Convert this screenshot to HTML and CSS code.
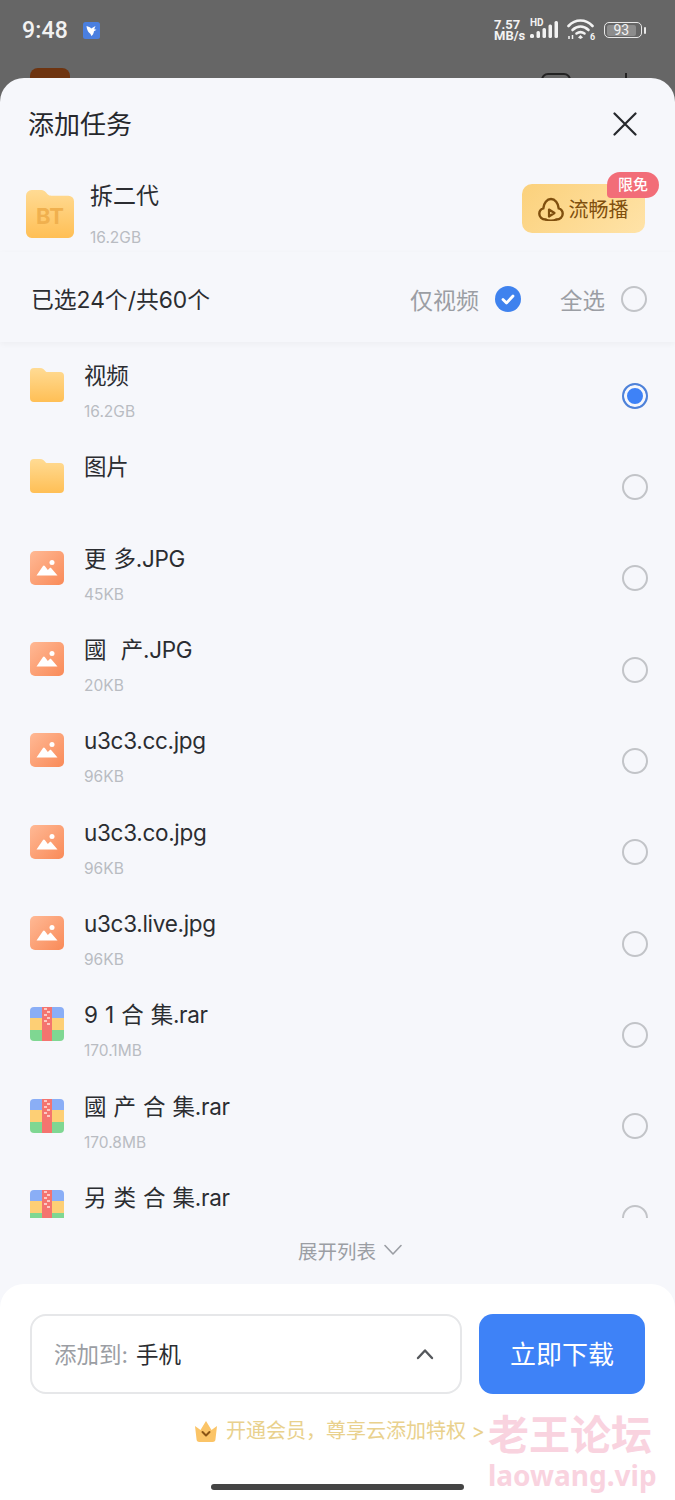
FILE: index.html
```html
<!DOCTYPE html>
<html lang="en">
<head>
    <meta charset="UTF-8">
    <title>添加任务</title>
    <link rel="stylesheet" href="styles.css">
</head>

<body>
    <svg class="defs" width="0" height="0">
        <defs>
            <linearGradient id="folderFill" x1="0" y1="0" x2="0" y2="1">
                <stop offset="0" stop-color="#ffdb94"/>
                <stop offset="1" stop-color="#ffbf55"/>
            </linearGradient>
            <linearGradient id="imageFill" x1="0" y1="0" x2="1" y2="1">
                <stop offset="0" stop-color="#ffb995"/>
                <stop offset="1" stop-color="#f98a58"/>
            </linearGradient>
            <symbol id="folder" viewBox="0 0 34 34">
                <path d="M0 4a4 4 0 0 1 4-4h6c3 0 4 1.500 5.500 3.200 .7 .7 1.300 .8 2.500 .8h12a4 4 0 0 1 4 4v22a4 4 0 0 1-4 4H4a4 4 0 0 1-4-4z" fill="url(#folderFill)"/>
            </symbol>
            <symbol id="image" viewBox="0 0 34 34">
                <rect width="34" height="34" rx="5" fill="url(#imageFill)"/>
                <circle cx="22" cy="11.500" r="2.500" fill="#fff"/>
                <path d="M6.500 24.500 13 15c.5-.7 1.300-.7 1.800 0l3 4 1.800-1.800c.5-.5 1.200-.5 1.700 0l6.200 7.300z" fill="#fff"/>
            </symbol>
            <symbol id="zip" viewBox="0 0 34 34">
                <path d="M0 11V4a4 4 0 0 1 4-4h26a4 4 0 0 1 4 4v7z" fill="#8aaef6"/>
                <rect y="11" width="34" height="12" fill="#fdcf75"/>
                <path d="M0 23h34v7a4 4 0 0 1-4 4H4a4 4 0 0 1-4-4z" fill="#7fd792"/>
                <rect x="12" width="10" height="34" fill="#f4746f"/>
                <path d="M14 1h3v2h-3zM17 4h3v2h-3zM14 7h3v2h-3zM17 10h3v2h-3zM14 13h3v2h-3zM17 16h3v2h-3z" fill="#fbc9c4"/>
            </symbol>
        </defs>
    </svg>

    <main class="screen">
        <div class="backdrop">
            <div class="statusbar">
                <div class="status-left">
                    <span class="clock">9:48</span>
                    <svg class="app-icon" viewBox="0 0 17 17">
                        <rect width="17" height="17" rx="2.500" fill="#4a7fe0"/>
                        <path d="M3.500 4c2 .4 3.500 1.200 4.700 2.500L12.500 4l-1.300 3.200 2.300.6-2.500 1.400c-.3 2.300-1.300 3.800-2.700 4.800-.3-1.400-.9-2.200-1.900-3C4.700 9.500 3.800 7 3.500 4z" fill="#fff"/>
                    </svg>
                </div>
                <div class="status-right">
                    <span class="speed">7.57<br>MB/s</span>
                    <span class="signal">
                        <span class="hd">HD</span>
                        <svg class="bars" viewBox="0 0 29 18">
                            <rect x="0" y="13" width="4" height="4" rx="1.500"/>
                            <rect x="6.500" y="10" width="3.500" height="7" rx="1.500"/>
                            <rect x="12.500" y="7" width="3.500" height="10" rx="1.500"/>
                            <rect x="18.500" y="3.500" width="3.500" height="13.500" rx="1.500"/>
                            <rect x="24.500" y="0" width="3.500" height="17" rx="1.500"/>
                        </svg>
                    </span>
                    <svg class="wifi" viewBox="0 0 29 22">
                        <g fill="none" stroke="#f2f2f2" stroke-width="2.600" stroke-linecap="round">
                            <path d="M1.500 8C8.500 .7 18.500 .7 25.500 8"/>
                            <path d="M5.500 12c5-4.500 11-4.500 16 0"/>
                            <path d="M9.500 15.500c2.800-2 5.200-2 8 0"/>
                        </g>
                        <path d="M11 19.500l2.500-2.500 2.500 2.500-2.500 1.500z" fill="#f2f2f2"/>
                        <path d="M2 21v-3M5.500 21v-4" stroke="#f2f2f2" stroke-width="1.500"/>
                        <text x="23" y="21.500" class="wifi-six">6</text>
                    </svg>
                    <span class="battery">
                        <span class="battery-body"><span class="battery-level">93</span></span>
                        <span class="battery-nub"></span>
                    </span>
                </div>
            </div>
            <div class="peek">
                <span class="peek-app"></span>
                <span class="peek-actions">
                    <span class="peek-box"></span>
                    <span class="peek-plus"></span>
                </span>
            </div>
        </div>

        <section class="sheet">
            <header class="sheet-head">
                <h1>添加任务</h1>
                <svg class="close" viewBox="0 0 24 24">
                    <path d="M1.500 1.500l21 21M22.500 1.500l-21 21" fill="none" stroke="#26282c" stroke-width="2.200" stroke-linecap="round"/>
                </svg>
            </header>

            <div class="torrent">
                <div class="bt-icon">
                    <svg class="bt-folder" viewBox="0 0 34 34"><use href="#folder"/></svg>
                    <span class="bt-label">BT</span>
                </div>
                <div class="torrent-info">
                    <div class="torrent-name">拆二代</div>
                    <div class="torrent-size">16.2GB</div>
                </div>
                <button class="play-btn" type="button">
                    <svg class="play-icon" viewBox="0 0 26 24">
                        <path d="M7.500 22.500C4 22.500 1.300 20 1.300 16.800c0-2.600 1.700-4.700 4-5.400C5.700 6 9 2 13 2s7.300 4 7.700 9.400c2.300 .7 4 2.800 4 5.400 0 3.200-2.700 5.700-6.200 5.700" fill="none" stroke="#7f4f0e" stroke-width="2.400" stroke-linecap="round"/>
                        <path d="M7.500 22.500c1.500 .6 3.500 1 5.500 1s4-.4 5.500-1" fill="none" stroke="#7f4f0e" stroke-width="2"/>
                        <path d="M11 12.500l5.500 3.500-5.500 3.500z" fill="none" stroke="#7f4f0e" stroke-width="2.200" stroke-linejoin="round"/>
                    </svg>
                    流畅播
                    <span class="free-badge">限免</span>
                </button>
            </div>

            <div class="select-bar">
                <span class="select-count">已选24个/共60个</span>
                <span class="select-opt">仅视频</span>
                <svg class="check" viewBox="0 0 26 26">
                    <circle cx="13" cy="13" r="13" fill="#3f82ee"/>
                    <path d="M8 13.500l3.500 3.500 6.500-7" fill="none" stroke="#fff" stroke-width="2.800" stroke-linecap="round" stroke-linejoin="round"/>
                </svg>
                <span class="select-opt select-all">全选</span>
                <span class="radio"></span>
            </div>

            <div class="file-list">
                <div class="file-row">
                    <svg class="file-icon"><use href="#folder"/></svg>
                    <div class="file-text"><div class="file-name">视频</div><div class="file-size">16.2GB</div></div>
                    <span class="radio radio-on"></span>
                </div>
                <div class="file-row">
                    <svg class="file-icon"><use href="#folder"/></svg>
                    <div class="file-text"><div class="file-name">图片</div></div>
                    <span class="radio"></span>
                </div>
                <div class="file-row">
                    <svg class="file-icon"><use href="#image"/></svg>
                    <div class="file-text"><div class="file-name">更 多.JPG</div><div class="file-size">45KB</div></div>
                    <span class="radio"></span>
                </div>
                <div class="file-row">
                    <svg class="file-icon"><use href="#image"/></svg>
                    <div class="file-text"><div class="file-name">國&nbsp; 产.JPG</div><div class="file-size">20KB</div></div>
                    <span class="radio"></span>
                </div>
                <div class="file-row">
                    <svg class="file-icon"><use href="#image"/></svg>
                    <div class="file-text"><div class="file-name">u3c3.cc.jpg</div><div class="file-size">96KB</div></div>
                    <span class="radio"></span>
                </div>
                <div class="file-row">
                    <svg class="file-icon"><use href="#image"/></svg>
                    <div class="file-text"><div class="file-name">u3c3.co.jpg</div><div class="file-size">96KB</div></div>
                    <span class="radio"></span>
                </div>
                <div class="file-row">
                    <svg class="file-icon"><use href="#image"/></svg>
                    <div class="file-text"><div class="file-name">u3c3.live.jpg</div><div class="file-size">96KB</div></div>
                    <span class="radio"></span>
                </div>
                <div class="file-row">
                    <svg class="file-icon"><use href="#zip"/></svg>
                    <div class="file-text"><div class="file-name">9 1 合 集.rar</div><div class="file-size">170.1MB</div></div>
                    <span class="radio"></span>
                </div>
                <div class="file-row">
                    <svg class="file-icon"><use href="#zip"/></svg>
                    <div class="file-text"><div class="file-name">國 产 合 集.rar</div><div class="file-size">170.8MB</div></div>
                    <span class="radio"></span>
                </div>
                <div class="file-row">
                    <svg class="file-icon"><use href="#zip"/></svg>
                    <div class="file-text"><div class="file-name">另 类 合 集.rar</div></div>
                    <span class="radio"></span>
                </div>
            </div>

            <div class="expand">
                展开列表
                <svg class="expand-arrow" viewBox="0 0 18 12">
                    <path d="M1 1.500l8 8.500 8-8.500" fill="none" stroke="#9b9ea4" stroke-width="1.600" stroke-linecap="round" stroke-linejoin="round"/>
                </svg>
            </div>

            <footer class="footer">
                <div class="footer-actions">
                    <div class="target">
                        <span class="target-label">添加到:</span>
                        <span class="target-value">手机</span>
                        <svg class="target-arrow" viewBox="0 0 18 12">
                            <path d="M2 10l7-7.500 7 7.500" fill="none" stroke="#55585c" stroke-width="2.400" stroke-linecap="round" stroke-linejoin="round"/>
                        </svg>
                    </div>
                    <button class="download" type="button">立即下载</button>
                </div>
                <div class="promo">
                    <svg class="crown" viewBox="0 0 24 22">
                        <path d="M1 6l5.500 4L12 1l5.500 9L23 6l-1.500 13a3 3 0 0 1-3 3h-13a3 3 0 0 1-3-3z" fill="#fbc467"/>
                        <path d="M8.500 12l3.500 3.500 3.500-3.500" fill="none" stroke="#8a5414" stroke-width="2" stroke-linecap="round" stroke-linejoin="round"/>
                    </svg>
                    <span>开通会员，尊享云添加特权 &gt;</span>
                </div>
                <div class="home-bar"></div>
            </footer>
        </section>

        <div class="watermark">
            <div class="wm-cn">老王论坛</div>
            <div class="wm-en">laowang.vip</div>
        </div>
    </main>
</body>
</html>
```

FILE: styles.css
```css
* {
    box-sizing: border-box;
}

body {
    margin: 0;
    font-family: "Inter", "Noto Sans CJK SC", sans-serif;
    color: #2b2d31;
}

.defs {
    position: absolute;
}

.screen {
    position: relative;
    width: 675px;
    height: 1500px;
    overflow: hidden;
    background: #666666;
    display: flex;
    flex-direction: column;
}

/* status bar and the page behind the sheet */
.backdrop {
    flex: none;
    height: 78px;
    overflow: hidden;
}

.statusbar {
    height: 68px;
    padding: 0 29px 8px 22px;
    display: flex;
    justify-content: space-between;
    align-items: center;
    color: #f2f2f2;
}

.status-left {
    display: flex;
    align-items: center;
    gap: 15px;
}

.clock {
    font-family: "Roboto", sans-serif;
    font-size: 23px;
    font-weight: 500;
    letter-spacing: 0.2px;
}

.app-icon {
    width: 17px;
    height: 17px;
}

.status-right {
    display: flex;
    align-items: center;
}

.speed {
    font-family: "Roboto", sans-serif;
    font-size: 13px;
    font-weight: 700;
    line-height: 11px;
    width: 36px;
}

.signal {
    position: relative;
    width: 37px;
    height: 22px;
}

.hd {
    position: absolute;
    left: 0;
    top: -2px;
    font-family: "Roboto", sans-serif;
    font-size: 10px;
    font-weight: 700;
    line-height: 12px;
}

.bars {
    position: absolute;
    left: 0;
    top: 2px;
    width: 29px;
    height: 18px;
    fill: #f2f2f2;
}

.wifi {
    width: 29px;
    height: 22px;
    margin-top: -2px;
}

.wifi-six {
    font-family: "Roboto", sans-serif;
    font-size: 9px;
    font-weight: 700;
    fill: #f2f2f2;
}

.battery {
    margin-left: 8px;
    display: flex;
    align-items: center;
    gap: 2px;
}

.battery-body {
    width: 38px;
    height: 16px;
    border: 1.500px solid #e8e8e8;
    border-radius: 5px;
    padding: 1.500px 5px 1.500px 1.500px;
}

.battery-level {
    display: block;
    height: 100%;
    background: #8c8c8c;
    border-radius: 2px;
    color: #f2f2f2;
    font-family: "Roboto", sans-serif;
    font-size: 14px;
    line-height: 10px;
    text-align: center;
}

.battery-nub {
    width: 2px;
    height: 7px;
    border-radius: 1px;
    background: #e8e8e8;
}

.peek {
    height: 10px;
    padding: 0 48px 0 30px;
    display: flex;
    justify-content: space-between;
}

.peek-app {
    width: 40px;
    height: 30px;
    background: #6e3410;
    border-radius: 8px;
}

.peek-actions {
    display: flex;
    gap: 54px;
    margin-top: 5px;
}

.peek-box {
    width: 30px;
    height: 30px;
    border: 2px solid #222222;
    border-radius: 7px;
}

.peek-plus {
    width: 2px;
    height: 30px;
    background: #222222;
}

/* bottom sheet */
.sheet {
    flex: 1;
    min-height: 0;
    background: #f6f7fb;
    border-radius: 24px 24px 0 0;
    display: flex;
    flex-direction: column;
    overflow: hidden;
}

.sheet-head {
    height: 92px;
    flex: none;
    padding: 0 38px 0 28px;
    display: flex;
    justify-content: space-between;
    align-items: center;
}

h1 {
    margin: 0 0 3px;
    font-size: 26px;
    font-weight: 400;
    color: #26282c;
}

.close {
    width: 24px;
    height: 24px;
}

.torrent {
    height: 82px;
    flex: none;
    padding: 0 30px 0 26px;
    display: flex;
    align-items: flex-start;
}

.bt-icon {
    position: relative;
    width: 48px;
    height: 48px;
    margin-top: 20px;
}

.bt-folder {
    width: 48px;
    height: 48px;
    display: block;
}

.bt-label {
    position: absolute;
    left: 10px;
    top: 11px;
    font-size: 22px;
    font-weight: 700;
    line-height: 30px;
    color: #f0b04e;
}

.torrent-info {
    flex: 1;
    margin-left: 16px;
}

.torrent-name {
    font-size: 23px;
    line-height: 52px;
    color: #2b2d31;
}

.torrent-size {
    font-size: 15.500px;
    line-height: 18px;
    margin-top: 7px;
    color: #b9bcc2;
}

.play-btn {
    position: relative;
    width: 123px;
    height: 49px;
    margin-top: 14px;
    border: none;
    border-radius: 10px;
    background: linear-gradient(135deg, #fbd17c, #ffe3a8);
    color: #7f4f0e;
    font-family: inherit;
    font-size: 20px;
    display: flex;
    align-items: center;
    justify-content: center;
    gap: 5px;
    padding: 0 1px 0 0;
}

.play-icon {
    width: 26px;
    height: 24px;
}

.free-badge {
    position: absolute;
    right: -14px;
    top: -12px;
    width: 52px;
    height: 26px;
    border-radius: 13px 13px 13px 4px;
    background: #f26d78;
    color: #fff;
    font-size: 15px;
    font-weight: 500;
    line-height: 26px;
    text-align: center;
}

.select-bar {
    height: 90px;
    flex: none;
    padding: 3px 28px 0 31px;
    display: flex;
    align-items: center;
    box-shadow: 0 2px 6px rgba(0, 0, 0, 0.04);
    position: relative;
}

.select-count {
    flex: 1;
    font-size: 22.800px;
    color: #2b2d31;
}

.select-opt {
    font-size: 23px;
    color: #9b9ea4;
}

.select-all {
    font-size: 22.500px;
    margin-left: 39px;
}

.check {
    width: 26px;
    height: 26px;
    margin-left: 16px;
}

.select-bar .radio {
    margin-left: 16px;
}

.radio {
    flex: none;
    width: 26px;
    height: 26px;
    border-radius: 50%;
    border: 2px solid #c2c4c8;
}

.radio-on {
    border: 2px solid #4f82d8;
    background: #3e82f7;
    box-shadow: inset 0 0 0 3px #f6f7fb;
}

.file-list {
    height: 876px;
    flex: none;
    padding: 8px 27px 0 30px;
    overflow: hidden;
}

.file-row {
    height: 91.330px;
    display: flex;
    align-items: center;
}

.file-icon {
    flex: none;
    width: 34px;
    height: 34px;
    align-self: flex-start;
    margin-top: 18px;
}

.file-text {
    flex: 1;
    align-self: flex-start;
    margin-left: 20px;
    margin-top: 9px;
}

.file-name {
    font-size: 22.500px;
    line-height: 34px;
    letter-spacing: -0.3px;
    word-spacing: 1.300px;
    color: #2b2d31;
}

.file-size {
    font-size: 15.500px;
    line-height: 20px;
    margin-top: 9px;
    color: #b9bcc2;
}

.expand {
    height: 66px;
    flex: none;
    padding: 0 0 2px 25px;
    display: flex;
    align-items: center;
    justify-content: center;
    gap: 8px;
    font-size: 19.500px;
    color: #9b9ea4;
}

.expand-arrow {
    width: 18px;
    height: 12px;
}

.footer {
    flex: 1;
    background: #ffffff;
    border-radius: 24px 24px 0 0;
    padding: 30px 30px 0;
    display: flex;
    flex-direction: column;
}

.footer-actions {
    display: flex;
    gap: 17px;
}

.target {
    width: 432px;
    height: 80px;
    border: 2px solid #e6e7e9;
    border-radius: 16px;
    padding: 0 26px 3px 22px;
    display: flex;
    align-items: center;
    font-size: 22.500px;
}

.target-label {
    color: #9b9ea4;
}

.target-value {
    flex: 1;
    margin-left: 8px;
    color: #2b2d31;
}

.target-arrow {
    width: 18px;
    height: 12px;
    margin-top: 3px;
}

.download {
    width: 166px;
    height: 80px;
    border: none;
    border-radius: 14px;
    background: #3e82f7;
    color: #fff;
    font-family: inherit;
    font-size: 26px;
    padding: 0 0 4px;
}

.promo {
    margin-top: 24px;
    margin-left: 164px;
    display: flex;
    align-items: center;
    gap: 8px;
    font-size: 20px;
    line-height: 26px;
    color: #e9d18d;
    white-space: nowrap;
}

.crown {
    width: 24px;
    height: 22px;
}

.home-bar {
    width: 253px;
    height: 6px;
    margin: 40px 0 0 181px;
    border-radius: 3px;
    background: #444444;
}

/* watermark lies over the footer */
.watermark {
    position: absolute;
    left: 488px;
    top: 1409px;
    color: #f9d3df;
    font-family: "Noto Sans", "Noto Sans CJK SC", sans-serif;
    font-weight: 700;
}

.wm-cn {
    font-size: 41px;
    line-height: 50px;
}

.wm-en {
    font-size: 28px;
    line-height: 32px;
}
```
